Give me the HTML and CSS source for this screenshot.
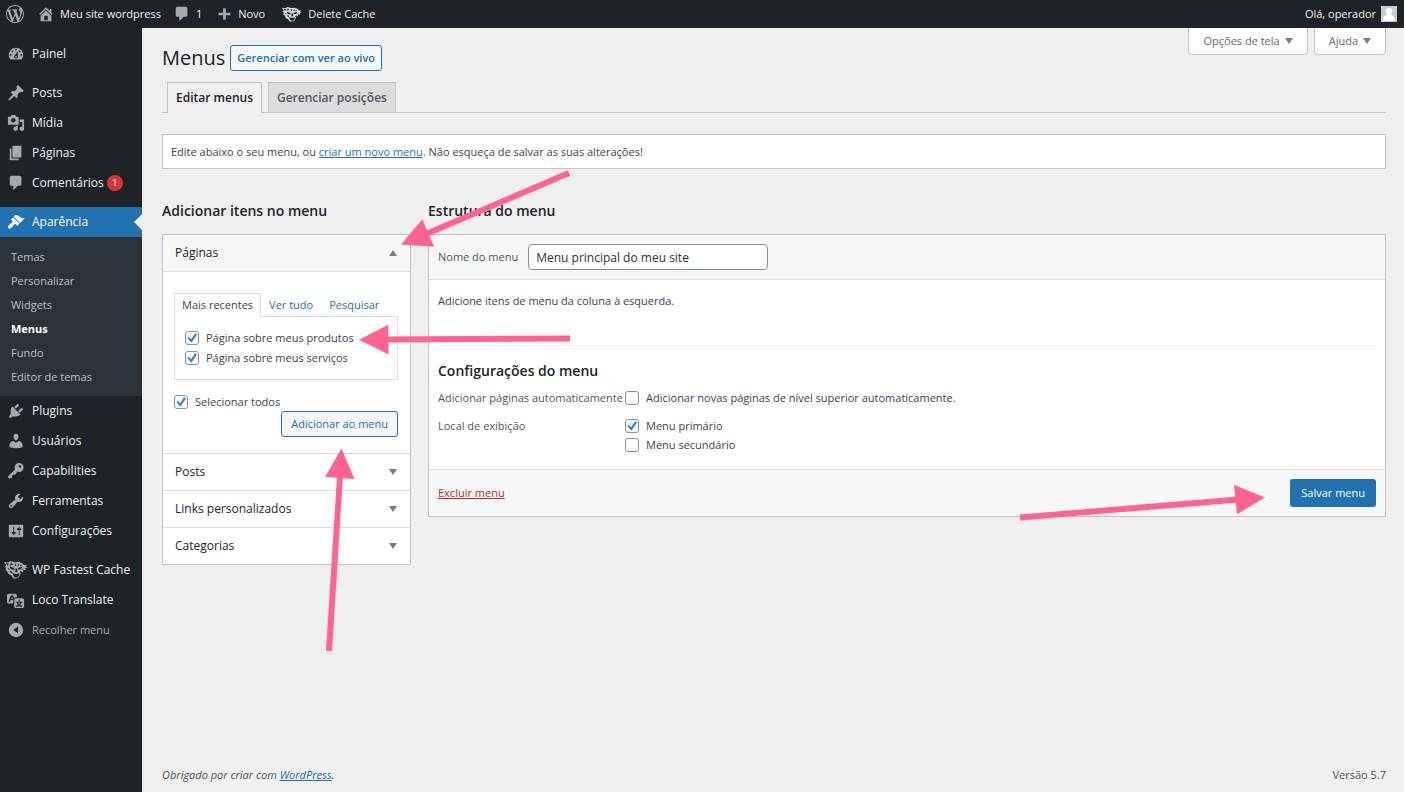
FILE: index.html
```html
<!DOCTYPE html>
<html lang="pt-BR">
<head>
<meta charset="utf-8">
<meta name="viewport" content="width=device-width, initial-scale=1">
<title>Menus ‹ Meu site wordpress — WordPress</title>
<link rel="stylesheet" href="styles.css">
</head>
<body>
<svg class="sprite" aria-hidden="true">
  <symbol id="i-wp" viewBox="0 0 20 20"><path d="M20 10c0-5.51-4.49-10-10-10C4.48 0 0 4.49 0 10c0 5.52 4.48 10 10 10 5.51 0 10-4.48 10-10zM7.78 15.37L4.37 6.22c.55-.02 1.17-.08 1.17-.08.5-.06.44-1.13-.06-1.11 0 0-1.45.11-2.37.11-.18 0-.37 0-.58-.01C4.12 2.69 6.87 1.11 10 1.11c2.33 0 4.45.87 6.05 2.34-.68-.11-1.65.39-1.65 1.58 0 .74.45 1.36.9 2.1.35.61.55 1.36.55 2.46 0 1.49-1.4 5-1.4 5l-3.03-8.37c.54-.02.82-.17.82-.17.5-.05.44-1.25-.06-1.22 0 0-1.44.12-2.38.12-.87 0-2.33-.12-2.33-.12-.5-.03-.56 1.2-.06 1.22l.92.08 1.26 3.41zM17.41 10c.24-.64.74-1.87.43-4.25.7 1.29 1.05 2.71 1.05 4.25 0 3.29-1.73 6.24-4.4 7.78.97-2.59 1.94-5.2 2.92-7.78zM6.1 18.09C3.12 16.65 1.11 13.53 1.11 10c0-1.3.23-2.48.72-3.59C3.25 10.3 4.67 14.2 6.1 18.09zm4.03-6.63l2.58 6.98c-.86.29-1.76.45-2.71.45-.79 0-1.57-.11-2.29-.33.81-2.38 1.62-4.74 2.42-7.1z"/></symbol>
  <symbol id="i-home" viewBox="0 0 20 20"><path d="M16 8.5l1.53 1.53-1.06 1.06L10 4.6l-6.47 6.49-1.06-1.06L10 2.5l4 4v-2h2v4zm-6-2.46l6 5.99V18H4v-5.97zM12 17v-5H8v5h4z"/></symbol>
  <symbol id="i-comment" viewBox="0 0 20 20"><path d="M5 2h9q.82 0 1.41.59T16 4v7q0 .82-.59 1.41T14 13h-2l-5 5v-5H5q-.82 0-1.41-.59T3 11V4q0-.82.59-1.41T5 2z"/></symbol>
  <symbol id="i-plus" viewBox="0 0 20 20"><path d="M17 8.5v3h-5v5H9v-5H4v-3h5v-5h3v5h5z"/></symbol>
  <symbol id="i-dash" viewBox="0 0 20 20"><path d="M3.76 16h12.48c1.1-1.37 1.76-3.11 1.76-5 0-4.42-3.58-8-8-8s-8 3.58-8 8c0 1.89.66 3.63 1.76 5zM10 4c.55 0 1 .45 1 1s-.45 1-1 1-1-.45-1-1 .45-1 1-1zM6 6c.55 0 1 .45 1 1s-.45 1-1 1-1-.45-1-1 .45-1 1-1zm8 0c.55 0 1 .45 1 1s-.45 1-1 1-1-.45-1-1 .45-1 1-1zm-5.37 5.55L12 7v6c0 1.1-.9 2-2 2s-2-.9-2-2c0-.57.24-1.08.63-1.45zM4 10c.55 0 1 .45 1 1s-.45 1-1 1-1-.45-1-1 .45-1 1-1zm12 0c.55 0 1 .45 1 1s-.45 1-1 1-1-.45-1-1 .45-1 1-1zm-5 3c0-.55-.45-1-1-1s-1 .45-1 1 .45 1 1 1 1-.45 1-1z"/></symbol>
  <symbol id="i-pin" viewBox="0 0 20 20"><path d="M10.44 3.02l1.82-1.82 6.36 6.35-1.83 1.82c-1.05-.68-2.48-.57-3.41.36l-.75.75c-.92.93-1.04 2.35-.35 3.41l-1.83 1.82-2.41-2.41-2.8 2.79c-.42.42-3.38 2.71-3.8 2.29s1.86-3.39 2.28-3.81l2.79-2.79L4.1 9.36l1.83-1.82c1.05.69 2.48.57 3.4-.36l.75-.75c.93-.92 1.05-2.35.36-3.41z"/></symbol>
  <symbol id="i-media" viewBox="0 0 20 20"><path d="M13 11V4c0-.55-.45-1-1-1h-1.67L9 1H5L3.67 3H2c-.55 0-1 .45-1 1v7c0 .55.45 1 1 1h10c.55 0 1-.45 1-1zM7 4.5c1.38 0 2.5 1.12 2.5 2.5S8.38 9.5 7 9.5 4.5 8.38 4.5 7 5.62 4.5 7 4.5zM14 6h5v10.5c0 1.38-1.12 2.5-2.5 2.5S14 17.88 14 16.5s1.12-2.5 2.5-2.5c.17 0 .34.02.5.05V9h-3V6zm-4 8.05V13h2v3.5c0 1.38-1.12 2.5-2.5 2.5S7 17.88 7 16.5 8.12 14 9.5 14c.17 0 .34.02.5.05z"/></symbol>
  <symbol id="i-page" viewBox="0 0 20 20"><path d="M6 15V2h10v13H6zm-1 1h8v2H3V5h2v11z"/></symbol>
  <symbol id="i-brush" viewBox="0 0 20 20"><path d="M14.48 11.06L7.41 3.99l1.5-1.5c.5-.56 2.3-.47 3.51.32 1.21.8 1.43 1.28 2.91 2.1 1.18.64 2.45 1.26 4.45.85zm-.71.71L6.7 4.7 4.93 6.47c-.39.39-.39 1.02 0 1.41l1.06 1.06c.39.39.39 1.03 0 1.42-.6.6-1.43 1.11-2.21 1.69-.35.26-.7.53-1.01.84C1.43 14.23.4 16.08 1.4 17.07c.99 1 2.84-.03 4.18-1.36.31-.31.58-.66.85-1.02.57-.78 1.08-1.61 1.69-2.21.39-.39 1.02-.39 1.41 0l1.06 1.06c.39.39 1.02.39 1.41 0z"/></symbol>
  <symbol id="i-plug" viewBox="0 0 20 20"><path d="M13.11 4.36L9.87 7.6 8 5.73l3.24-3.24c.35-.34 1.05-.2 1.56.32.52.51.66 1.21.31 1.55zm-8 1.77l.91-1.12 9.01 9.01-1.19.84c-.71.71-2.63 1.16-3.82 1.16H6.14L4.9 17.26c-.59.59-1.54.59-2.12 0-.59-.58-.59-1.53 0-2.12l1.24-1.24v-3.88c0-1.13.4-3.19 1.09-3.89zm7.26 3.97l3.24-3.24c.34-.35 1.04-.21 1.55.31.52.51.66 1.21.31 1.55l-3.24 3.25z"/></symbol>
  <symbol id="i-user" viewBox="0 0 20 20"><path d="M10 9.25c-2.27 0-2.73-3.44-2.73-3.44C7 4.02 7.82 2 9.97 2c2.16 0 2.98 2.02 2.71 3.81 0 0-.41 3.44-2.68 3.44zm0 2.57L12.72 10c2.39 0 4.52 2.33 4.52 4.53v2.49s-3.65 1.13-7.24 1.13c-3.65 0-7.24-1.13-7.24-1.13v-2.49c0-2.25 1.94-4.48 4.47-4.48z"/></symbol>
  <symbol id="i-key" viewBox="0 0 20 20"><path d="M16.95 2.58c1.96 1.95 1.96 5.12 0 7.07-1.51 1.51-3.75 1.84-5.59 1.01l-1.87 3.31-2.99.31L5 18H2l-1-2 7.95-7.69c-.92-1.87-.62-4.18.93-5.73 1.95-1.96 5.12-1.96 7.07 0zm-2.51 3.79c.74 0 1.33-.6 1.33-1.34 0-.73-.59-1.33-1.33-1.33-.73 0-1.33.6-1.33 1.33 0 .74.6 1.34 1.33 1.34z"/></symbol>
  <symbol id="i-tools" viewBox="0 0 20 20"><path d="M16.68 9.77c-1.34 1.34-3.3 1.67-4.95.99l-5.41 6.52c-.99.99-2.59.99-3.58 0s-.99-2.59 0-3.57l6.52-5.42c-.68-1.65-.35-3.61.99-4.95 1.28-1.28 3.12-1.62 4.72-1.06l-2.89 2.89 2.82 2.82 2.86-2.87c.53 1.58.18 3.39-1.08 4.65zM3.81 16.21c.4.39 1.04.39 1.43 0 .4-.4.4-1.04 0-1.43-.39-.4-1.03-.4-1.43 0-.39.39-.39 1.03 0 1.43z"/></symbol>
  <symbol id="i-settings" viewBox="0 0 20 20"><path d="M18 16V4c0-.55-.45-1-1-1H3c-.55 0-1 .45-1 1v12c0 .55.45 1 1 1h14c.55 0 1-.45 1-1zM8 11h1c.55 0 1 .45 1 1s-.45 1-1 1H8v1.5c0 .28-.22.5-.5.5s-.5-.22-.5-.5V13H6c-.55 0-1-.45-1-1s.45-1 1-1h1V5.5c0-.28.22-.5.5-.5s.5.22.5.5V11zm5-2h-1c-.55 0-1-.45-1-1s.45-1 1-1h1V5.5c0-.28.22-.5.5-.5s.5.22.5.5V7h1c.55 0 1 .45 1 1s-.45 1-1 1h-1v5.5c0 .28-.22.5-.5.5s-.5-.22-.5-.5V9z"/></symbol>
  <symbol id="i-translate" viewBox="0 0 20 20"><path d="M11 7H9.49c-.63 0-1.25.3-1.59.7L7 5H4.13l-2.39 7h1.69l.74-2H7v4H2c-1.1 0-2-.9-2-2V5c0-1.1.9-2 2-2h7c1.1 0 2 .9 2 2v2zM6.51 9H4.49l1-2.93zM10 8h7c1.1 0 2 .9 2 2v7c0 1.1-.9 2-2 2h-7c-1.1 0-2-.9-2-2v-7c0-1.1.9-2 2-2zm7.25 5v-1.08h-3.17V9.75h-1.16v2.17H9.75V13h1.28c.11.85.56 1.85 1.28 2.62-.87.36-1.89.62-2.31.62-.01.02.22.97.2 1.46.84 0 2.21-.5 3.28-1.15 1.09.65 2.48 1.15 3.34 1.15-.02-.49.2-1.44.2-1.46-.43 0-1.49-.27-2.38-.63.7-.77 1.14-1.77 1.25-2.61h1.36zm-3.81 1.93c-.5-.46-.85-1.13-1.01-1.93h2.09c-.17.8-.51 1.47-1 1.93l-.04.03s-.03-.02-.04-.03z"/></symbol>
  <symbol id="i-collapse" viewBox="0 0 20 20"><path fill-rule="evenodd" d="M10 2a8 8 0 1 0 0 16 8 8 0 0 0 0-16zM12.300 6v8L7 10z"/></symbol>
  <symbol id="i-tiger" viewBox="0 0 24 18">
    <path d="M0 1l4 .4L6.500 0l4.500 1.200L15.500.8l3 1.600 1.500 1.600 3.500.6-2 1.100 2.200 1-2.700.6 1.200 1.600-3 0 .2 2.200-2.200-.4-.8 2.600-1.500 3-3 1.500-3-.7-1.500-2.500-3-1.500-1-2.600-2-1.500.8-1.800L1 5.200l1.300-.8z"/>
    <path class="ink" d="M1.800 2l3 .8-1.300 2zM7 1.500l2.500 2.800-2-.6-2 1.200zM11.500 2.200l.8 2.600-1.800.4zM15.500 2l-.6 2.800-1.600-.2zM18.200 3.600l-2.400 1 1 .8zM5.500 5.600l4.300 1.200.9 2-3.400-.5-1.300-1.200zM18.600 5.600l-4.200 1.300-.8 1.900 3.200-.5zM3.600 6.600l2.200 2-1.200.2zM20 7.500l-2.600 1.200 1.800.1zM11.600 7.500h1.300l.6 3.600-2.300.2zM5.600 10l2.400.3.600 2.200-1.300-.4zM18 10.200l-1.800.3-.6 1.400 1.300-.3zM8.800 12l2.200 1h2.600l1.800-1-.4 2.800-1.600 1.600h-2.300L9.400 15z"/>
  </symbol>
  <symbol id="i-down" viewBox="0 0 8 6"><path d="M0 0h8L4 6z"/></symbol>
  <symbol id="i-up" viewBox="0 0 8 6"><path d="M0 6h8L4 0z"/></symbol>
</svg>

<header class="adminbar">
  <nav class="adminbar-links" aria-label="Barra de ferramentas">
    <a class="bar-logo" href="#" aria-label="Sobre o WordPress"><svg class="icon"><use href="#i-wp"/></svg></a>
    <a class="bar-site" href="#"><svg class="icon"><use href="#i-home"/></svg>Meu site wordpress</a>
    <a class="bar-comments" href="#"><svg class="icon"><use href="#i-comment"/></svg>1</a>
    <a class="bar-new" href="#"><svg class="icon"><use href="#i-plus"/></svg>Novo</a>
    <a class="bar-cache" href="#"><svg class="icon-tiger"><use href="#i-tiger"/></svg>Delete Cache</a>
  </nav>
  <a class="account" href="#">Olá, operador
    <svg class="avatar" viewBox="0 0 16 16"><rect width="16" height="16" fill="#c9cacc"/><path fill="#fff" d="M8 2a3.300 3.300 0 0 1 3.300 3.500C11.300 7.200 10.500 8.300 10 8.800c.6.900 4 1.200 4 4.700V15H2v-1.500c0-3.500 3.400-3.800 4-4.700-.5-.5-1.300-1.600-1.300-3.300A3.300 3.300 0 0 1 8 2z"/></svg>
  </a>
</header>

<div class="layout">
  <nav class="sidebar" aria-label="Menu principal">
    <ul class="menu-group">
      <li><a class="menu-link" href="#"><svg class="icon"><use href="#i-dash"/></svg>Painel</a></li>
    </ul>
    <ul class="menu-group">
      <li><a class="menu-link" href="#"><svg class="icon"><use href="#i-pin"/></svg>Posts</a></li>
      <li><a class="menu-link" href="#"><svg class="icon"><use href="#i-media"/></svg>Mídia</a></li>
      <li><a class="menu-link" href="#"><svg class="icon"><use href="#i-page"/></svg>Páginas</a></li>
      <li><a class="menu-link" href="#"><svg class="icon"><use href="#i-comment"/></svg>Comentários <span class="count">1</span></a></li>
    </ul>
    <ul class="menu-group">
      <li>
        <a class="menu-link current" href="#"><svg class="icon"><use href="#i-brush"/></svg>Aparência</a>
        <ul class="submenu">
          <li><a href="#">Temas</a></li>
          <li><a href="#">Personalizar</a></li>
          <li><a href="#">Widgets</a></li>
          <li><a class="active" href="#">Menus</a></li>
          <li><a href="#">Fundo</a></li>
          <li><a href="#">Editor de temas</a></li>
        </ul>
      </li>
      <li><a class="menu-link" href="#"><svg class="icon"><use href="#i-plug"/></svg>Plugins</a></li>
      <li><a class="menu-link" href="#"><svg class="icon"><use href="#i-user"/></svg>Usuários</a></li>
      <li><a class="menu-link" href="#"><svg class="icon"><use href="#i-key"/></svg>Capabilities</a></li>
      <li><a class="menu-link" href="#"><svg class="icon"><use href="#i-tools"/></svg>Ferramentas</a></li>
      <li><a class="menu-link" href="#"><svg class="icon"><use href="#i-settings"/></svg>Configurações</a></li>
    </ul>
    <ul class="menu-group">
      <li><a class="menu-link menu-wide" href="#"><svg class="icon-tiger"><use href="#i-tiger"/></svg>WP Fastest Cache</a></li>
      <li><a class="menu-link" href="#"><svg class="icon"><use href="#i-translate"/></svg>Loco Translate</a></li>
      <li><button class="menu-link collapse" type="button"><svg class="icon"><use href="#i-collapse"/></svg>Recolher menu</button></li>
    </ul>
  </nav>

  <main class="content">
    <div class="page-head">
      <div class="title-row">
        <h1>Menus</h1>
        <a class="btn btn-title" href="#">Gerenciar com ver ao vivo</a>
      </div>
      <div class="screen-tabs">
        <button class="screen-tab" type="button">Opções de tela<svg class="caret"><use href="#i-down"/></svg></button>
        <button class="screen-tab" type="button">Ajuda<svg class="caret"><use href="#i-down"/></svg></button>
      </div>
    </div>

    <nav class="nav-tabs" aria-label="Seções">
      <a class="nav-tab nav-tab-active" href="#">Editar menus</a>
      <a class="nav-tab" href="#">Gerenciar posições</a>
    </nav>

    <p class="notice">Edite abaixo o seu menu, ou <a href="#">criar um novo menu</a>. Não esqueça de salvar as suas alterações!</p>

    <div class="columns">
      <section class="col-items">
        <h2>Adicionar itens no menu</h2>
        <div class="accordion">
          <button class="acc-head acc-open" type="button">Páginas<svg class="caret"><use href="#i-up"/></svg></button>
          <div class="acc-body">
            <div class="mini-tabs">
              <a class="mini-tab mini-active" href="#">Mais recentes</a>
              <a class="mini-tab" href="#">Ver tudo</a>
              <a class="mini-tab" href="#">Pesquisar</a>
            </div>
            <div class="mini-panel">
              <label class="check"><input type="checkbox" checked>Página sobre meus produtos</label>
              <label class="check"><input type="checkbox" checked>Página sobre meus serviços</label>
            </div>
            <label class="check check-all"><input type="checkbox" checked>Selecionar todos</label>
            <div class="add-row"><button class="btn btn-add" type="button">Adicionar ao menu</button></div>
          </div>
          <button class="acc-head" type="button">Posts<svg class="caret"><use href="#i-down"/></svg></button>
          <button class="acc-head" type="button">Links personalizados<svg class="caret"><use href="#i-down"/></svg></button>
          <button class="acc-head" type="button">Categorias<svg class="caret"><use href="#i-down"/></svg></button>
        </div>
      </section>

      <section class="col-structure">
        <h2>Estrutura do menu</h2>
        <form class="editor">
          <div class="editor-head">
            <label for="menu-name">Nome do menu</label>
            <input class="text-input" id="menu-name" type="text" value="Menu principal do meu site">
          </div>
          <div class="editor-body">
            <p class="hint">Adicione itens de menu da coluna à esquerda.</p>
            <div class="settings">
              <h3>Configurações do menu</h3>
              <div class="setting" role="group" aria-labelledby="auto-add">
                <span class="setting-name" id="auto-add">Adicionar páginas automaticamente</span>
                <div class="options">
                  <label class="check"><input type="checkbox">Adicionar novas páginas de nível superior automaticamente.</label>
                </div>
              </div>
              <div class="setting" role="group" aria-labelledby="location">
                <span class="setting-name" id="location">Local de exibição</span>
                <div class="options">
                  <label class="check"><input type="checkbox" checked>Menu primário</label>
                  <label class="check"><input type="checkbox">Menu secundário</label>
                </div>
              </div>
            </div>
          </div>
          <div class="editor-foot">
            <a class="delete" href="#">Excluir menu</a>
            <button class="btn-primary" type="button">Salvar menu</button>
          </div>
        </form>
      </section>
    </div>

    <footer class="footer">
      <p class="thanks">Obrigado por criar com <a href="#">WordPress</a>.</p>
      <p>Versão 5.7</p>
    </footer>
  </main>
</div>

<!-- Tutorial arrows laid over the screen -->
<svg class="arrows" width="1404" height="792" viewBox="0 0 1404 792" aria-hidden="true">
  <g stroke="#ff6490" stroke-width="6">
    <path d="M569 173L426 234"/>
    <path d="M570 338.500L386 339.500"/>
    <path d="M329 651L340 476"/>
    <path d="M1020 517.500L1238 499.500"/>
  </g>
  <g fill="#ff6490">
    <path d="M401 244.500L422.300 219.300 434.200 246.800z"/>
    <path d="M359 339.700L388.300 324.800 388.600 354.400z"/>
    <path d="M341.500 448.500L325 477 354.500 479z"/>
    <path d="M1265 497.500L1234 484.800 1237 514.300z"/>
  </g>
</svg>
</body>
</html>
```

FILE: styles.css
```css
* { box-sizing: border-box; }

body {
  margin: 0;
  min-height: 100vh;
  display: flex;
  flex-direction: column;
  position: relative;
  overflow-x: hidden;
  background: #efefef;
  color: #3c434a;
  font: 11px/18px "Open Sans", "Noto Sans", sans-serif;
}

h1, h2, h3, p, ul { margin: 0; padding: 0; }
ul { list-style: none; }
a { color: #2271b1; }
button, input { font: inherit; color: inherit; }
button { cursor: pointer; }

.sprite { position: absolute; width: 0; height: 0; }
.icon { width: 18px; height: 18px; flex: none; fill: #a7aaad; }
.icon-tiger { width: 24px; height: 18px; flex: none; fill: #a7aaad; }
.ink { fill: #1d2327; }
.caret { width: 8px; height: 6px; flex: none; fill: #787c82; }

/* Top bar */
.adminbar {
  display: flex;
  justify-content: space-between;
  height: 28px;
  padding: 0 7px 0 6px;
  background: #1d2327;
}
.adminbar a {
  display: flex;
  align-items: center;
  color: #f0f0f1;
  text-decoration: none;
}
.adminbar-links { display: flex; }
.bar-logo { margin-right: 13px; }
.adminbar .bar-site { gap: 5px; margin-right: 12px; }
.adminbar .bar-comments { gap: 5px; margin-right: 13px; }
.adminbar .bar-new { gap: 5px; margin-right: 17px; }
.adminbar .bar-cache { gap: 6px; }
.adminbar .icon-tiger { width: 20px; height: 15px; fill: #dcdcde; }
.adminbar .account { gap: 5px; }
.avatar { width: 16px; height: 16px; }

.layout { display: flex; flex: 1; }

/* Side menu */
.sidebar {
  width: 142px;
  flex: none;
  display: flex;
  flex-direction: column;
  gap: 9px;
  padding-top: 11px;
  background: #1d2327;
}
.menu-link {
  position: relative;
  display: flex;
  align-items: center;
  gap: 7px;
  width: 100%;
  height: 30px;
  padding: 0 0 0 7px;
  border: 0;
  background: none;
  color: #f0f0f1;
  font-size: 12px;
  text-decoration: none;
  white-space: nowrap;
}
.menu-wide { gap: 4px; padding-left: 4px; }
.current { background: #2271b1; color: #fff; }
.current .icon { fill: #fff; }
.current::after {
  content: "";
  position: absolute;
  right: 0;
  top: 7px;
  border: 8px solid transparent;
  border-left: 0;
  border-right-color: #efefef;
}
.collapse { color: #a7aaad; font-size: 11px; }
.count {
  width: 16px;
  height: 16px;
  margin-left: -4px;
  border-radius: 8px;
  background: #d63638;
  color: #fff;
  font-size: 9px;
  line-height: 16px;
  text-align: center;
}
.submenu { padding: 8px 0 7px 11px; background: #2c3338; }
.submenu a {
  display: block;
  color: #bdbfc1;
  line-height: 24px;
  text-decoration: none;
}
.submenu .active { color: #fff; font-weight: 700; }

/* Page */
.content {
  flex: 1;
  min-width: 0;
  display: flex;
  flex-direction: column;
  padding: 0 18px 8px 20px;
}
.page-head {
  display: flex;
  justify-content: space-between;
  align-items: flex-start;
}
.title-row { display: flex; align-items: center; gap: 5px; padding: 16px 0 10px; }
h1 { color: #1d2327; font-size: 20px; font-weight: 400; line-height: 28px; }
h2, h3 { color: #1d2327; font-size: 14px; font-weight: 600; line-height: 20px; }

.btn {
  border: 1px solid #2271b1;
  border-radius: 3px;
  background: #f6f7f7;
  color: #2271b1;
  text-decoration: none;
  white-space: nowrap;
}
.btn-title { padding: 2px 6px; font-weight: 600; line-height: 20px; }
.btn-add { height: 26px; padding: 0 9px; }

.screen-tabs { display: flex; gap: 6px; }
.screen-tab {
  display: flex;
  align-items: center;
  gap: 5px;
  height: 27px;
  padding: 0 14px;
  border: 1px solid #c3c4c7;
  border-top: 0;
  border-radius: 0 0 4px 4px;
  background: #fff;
  color: #646970;
}

.nav-tabs {
  display: flex;
  gap: 6px;
  padding-left: 5px;
  border-bottom: 1px solid #c3c4c7;
}
.nav-tab {
  padding: 5px 8px 4px;
  border: 1px solid #c3c4c7;
  border-bottom: 0;
  background: #dcdcde;
  color: #50575e;
  font-size: 12px;
  font-weight: 600;
  line-height: 20px;
  text-decoration: none;
}
.nav-tab-active { margin-bottom: -1px; background: #efefef; color: #1d2327; }

.notice {
  margin-top: 21px;
  padding: 8px 8px 7px;
  border: 1px solid #c3c4c7;
  background: #fff;
}

.columns {
  display: grid;
  grid-template-columns: 249px minmax(0, 1fr);
  gap: 17px;
  align-items: start;
  margin-top: 32px;
}
.columns h2 { margin-bottom: 13px; }

/* Item picker */
.accordion { border: 1px solid #c3c4c7; background: #fff; }
.acc-head {
  display: flex;
  align-items: center;
  justify-content: space-between;
  width: 100%;
  height: 37px;
  padding: 0 13px 0 12px;
  border: 0;
  border-top: 1px solid #dcdcde;
  background: #fff;
  color: #1d2327;
  font-size: 12px;
  font-weight: 500;
}
.acc-open { height: 36px; border-top: 0; background: #f6f7f7; }
.acc-body { padding: 21px 12px 16px 11px; border-top: 1px solid #dcdcde; }
.mini-tabs { display: flex; }
.mini-tab {
  padding: 2px 7px;
  border: 1px solid transparent;
  border-bottom: 0;
  text-decoration: none;
  white-space: nowrap;
}
.mini-active {
  margin-bottom: -1px;
  padding-bottom: 3px;
  border-color: #dcdcde;
  background: #fff;
  color: #3c434a;
}
.mini-panel {
  display: flex;
  flex-direction: column;
  gap: 2px;
  padding: 12px 10px;
  border: 1px solid #dcdcde;
}

.check { display: flex; align-items: center; gap: 7px; }
.check input {
  appearance: none;
  width: 14px;
  height: 14px;
  flex: none;
  margin: 0;
  border: 1px solid #8c8f94;
  border-radius: 3px;
  background: #fff;
}
.check input:checked::before {
  content: "";
  display: block;
  width: 12px;
  height: 12px;
  background: #3582c4;
  clip-path: polygon(10% 51%, 25% 42%, 42% 60%, 76% 10%, 92% 20%, 45% 90%);
}
.check-all { margin-top: 13px; }
.add-row { display: flex; justify-content: flex-end; }

/* Menu editor */
.editor { border: 1px solid #c3c4c7; background: #fff; }
.editor-head {
  display: flex;
  align-items: center;
  gap: 10px;
  padding: 9px;
  border-bottom: 1px solid #dcdcde;
  background: #f6f7f7;
}
.editor-head label, .setting-name { color: #50575e; }
.text-input {
  width: 240px;
  height: 26px;
  padding: 0 7px;
  border: 1px solid #8c8f94;
  border-radius: 4px;
  background: #fff;
  color: #2c3338;
  font-size: 12px;
}
.editor-body { padding: 12px 9px 15px; }
.settings { margin-top: 35px; padding-top: 15px; border-top: 1px solid #f0f0f1; }
.setting {
  display: grid;
  grid-template-columns: 187px minmax(0, 1fr);
  margin-top: 8px;
}
.setting + .setting { margin-top: 10px; }
.setting-name { white-space: nowrap; }
.options { display: grid; gap: 1px; }
.editor-foot {
  display: flex;
  align-items: center;
  justify-content: space-between;
  padding: 9px;
  border-top: 1px solid #dcdcde;
  background: #f6f7f7;
}
.delete { color: #b32d2e; }
.btn-primary {
  height: 28px;
  padding: 0 11px;
  border: 0;
  border-radius: 3px;
  background: #2271b1;
  color: #fff;
}

.footer {
  display: flex;
  justify-content: space-between;
  margin-top: auto;
  color: #50575e;
}
.thanks { font-style: italic; }

.arrows { position: absolute; left: 0; top: 0; pointer-events: none; fill: none; }
```
